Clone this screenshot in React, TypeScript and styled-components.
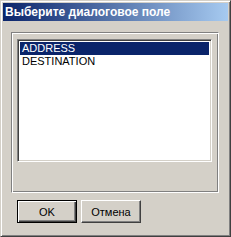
import styled, {createGlobalStyle} from 'styled-components';

const GlobalStyle = createGlobalStyle`
	html, body {
		margin: 0;
		padding: 0;
		background: #d4d0c8;
	}
	* {
		box-sizing: border-box;
	}
`;

const items = ['ADDRESS', 'DESTINATION'];

const App = () => {
	return (
		<>
			<GlobalStyle />
			<Window>
				<TitleBar>Выберите диалоговое поле</TitleBar>
				<Body>
					<GroupBox>
						<ListBox>
							{items.map((item, i) => (
								<ListItem key={item} $selected={i === 0}>
									{item}
								</ListItem>
							))}
						</ListBox>
					</GroupBox>
					<Buttons>
						<Button $default>OK</Button>
						<Button>Отмена</Button>
					</Buttons>
				</Body>
			</Window>
		</>
	);
};

const Window = styled.div`
	width: 231px;
	height: 237px;
	background: #d4d0c8;
	border: 1px solid;
	border-color: #d4d0c8 #404040 #404040 #d4d0c8;
	box-shadow: inset 1px 1px 0 #fff, inset -1px -1px 0 #808080;
	padding: 2px;
	display: flex;
	flex-direction: column;
	font-family: 'Liberation Sans', Arial, sans-serif;
	font-size: 11px;
	color: #000;
`;

const TitleBar = styled.div`
	height: 18px;
	display: flex;
	align-items: center;
	padding-left: 2px;
	background: linear-gradient(to right, #0a246a, #a6caf0);
	color: #fff;
	font-family: 'Liberation Sans', Arial, sans-serif;
	font-weight: bold;
	font-size: 12px;
	white-space: nowrap;
`;

const Body = styled.div`
	display: flex;
	flex-direction: column;
	padding: 11px 0 0 8px;
`;

const GroupBox = styled.div`
	width: 208px;
	height: 161px;
	border: 1px solid;
	border-color: #808080 #fff #fff #808080;
	box-shadow: inset 1px 1px 0 #fff, inset -1px -1px 0 #808080;
	padding: 6px 0 0 5px;
`;

const ListBox = styled.div`
	width: 195px;
	height: 123px;
	background: #fff;
	border: 1px solid;
	border-color: #808080 #fff #fff #808080;
	box-shadow: inset 1px 1px 0 #404040, inset -1px -1px 0 #d4d0c8;
	padding: 2px;
	display: flex;
	flex-direction: column;
`;

const ListItem = styled.div<{$selected?: boolean}>`
	height: 13px;
	line-height: 13px;
	padding-left: 2px;
	background: ${p => (p.$selected ? '#0a246a' : 'transparent')};
	color: ${p => (p.$selected ? '#fff' : '#000')};
	white-space: nowrap;
`;

const Buttons = styled.div`
	display: flex;
	gap: 4px;
	margin: 7px 0 0 6px;
`;

const Button = styled.button<{$default?: boolean}>`
	width: 60px;
	height: 23px;
	padding: 0;
	margin: 0;
	background: #d4d0c8;
	font-family: 'Liberation Sans', Arial, sans-serif;
	font-size: 11px;
	color: #000;
	border: 1px solid;
	border-color: ${p => (p.$default ? '#000' : '#fff #404040 #404040 #fff')};
	box-shadow: ${p =>
		p.$default
			? 'inset 1px 1px 0 #fff, inset -1px -1px 0 #404040, inset -2px -2px 0 #808080'
			: 'inset -1px -1px 0 #808080'};
	cursor: pointer;
`;

export default App;
